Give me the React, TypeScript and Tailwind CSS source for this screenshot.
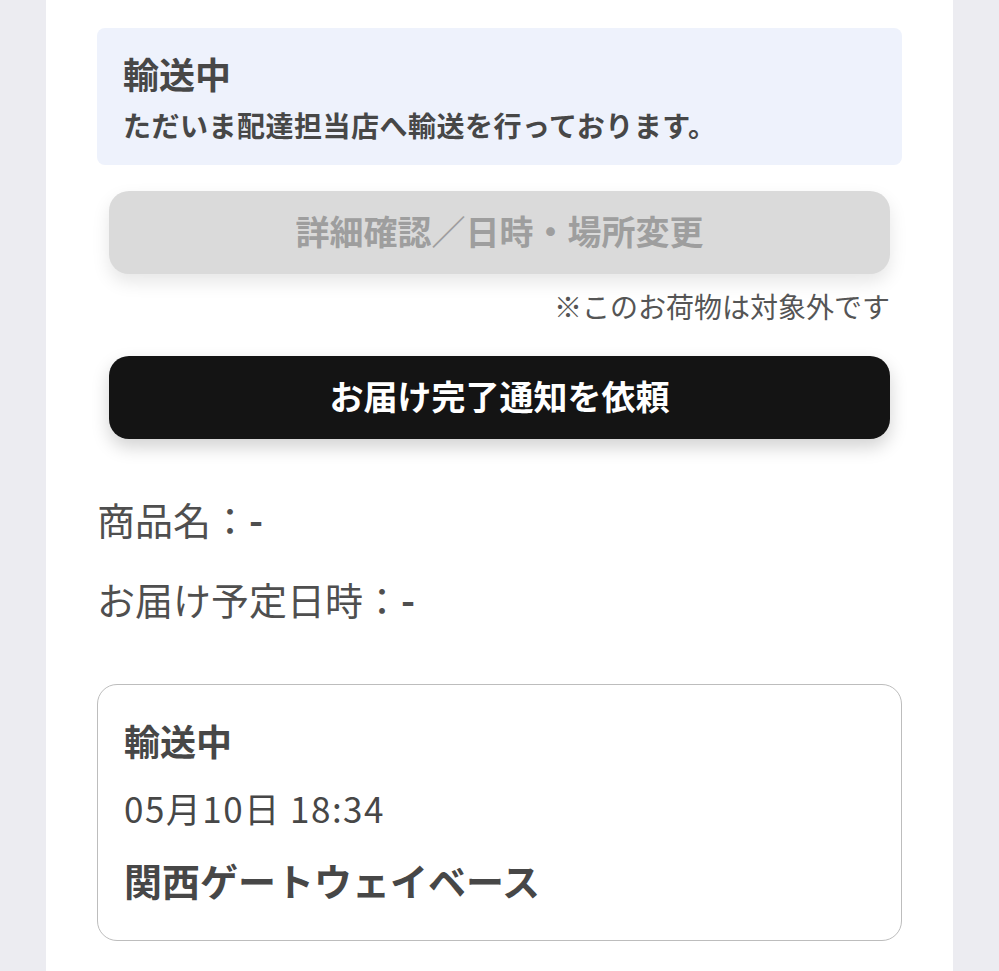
import React from "react";

export default function App() {
  const font = { fontFamily: '"Noto Sans CJK JP", "Noto Sans", sans-serif' };
  return (
    <div className="min-h-[971px] w-full bg-[#ececf1] flex justify-center" style={font}>
      <div className="w-[907px] min-h-[971px] bg-white flex flex-col px-[51px] pt-[28px] pb-[40px]">
        {/* Info box */}
        <div className="rounded-[8px] bg-[#eef2fc] pl-[26px] pr-[20px] pt-[23px] pb-[22px]">
          <div className="text-[36px] leading-[44px] font-semibold text-[#474747]">輸送中</div>
          <div className="mt-[12px] text-[28px] leading-[36px] font-semibold tracking-[0.5px] text-[#474747]">
            ただいま配達担当店へ輸送を行っております。
          </div>
        </div>

        {/* Disabled button */}
        <div className="mx-[12px] mt-[26px] flex flex-col">
          <div className="h-[83px] rounded-[20px] bg-[#dadada] flex items-center justify-center shadow-[0_8px_18px_rgba(0,0,0,0.10)]">
            <span className="text-[34px] font-semibold text-[#9e9e9e] leading-none -mt-[4px]">詳細確認／日時・場所変更</span>
          </div>
          <div className="mt-[14px] text-right text-[28px] leading-[36px] text-[#555555]">
            ※このお荷物は対象外です
          </div>
          <div className="mt-[32px] h-[83px] rounded-[20px] bg-[#141414] flex items-center justify-center shadow-[0_8px_18px_rgba(0,0,0,0.18)]">
            <span className="text-[34px] font-semibold text-white leading-none -mt-[4px]">お届け完了通知を依頼</span>
          </div>
        </div>

        <div className="mt-[56px] text-[38px] leading-[48px] text-[#4f4f4f]">
          商品名：<span className="font-bold">-</span>
        </div>
        <div className="mt-[32px] text-[38px] leading-[48px] text-[#4f4f4f]">
          お届け予定日時：<span className="font-bold">-</span>
        </div>

        {/* Status card */}
        <div className="mt-[61px] rounded-[20px] border border-[#bdbdbd] pl-[26px] pr-[20px] pt-[33px] pb-[36px]">
          <div className="text-[36px] leading-[44px] font-semibold text-[#474747]">輸送中</div>
          <div className="mt-[26px] text-[35px] leading-[40px] tracking-[1.5px] text-[#474747]">05月10日 18:34</div>
          <div className="mt-[28px] text-[38px] leading-[48px] font-semibold text-[#474747]">関西ゲートウェイベース</div>
        </div>
      </div>
    </div>
  );
}
